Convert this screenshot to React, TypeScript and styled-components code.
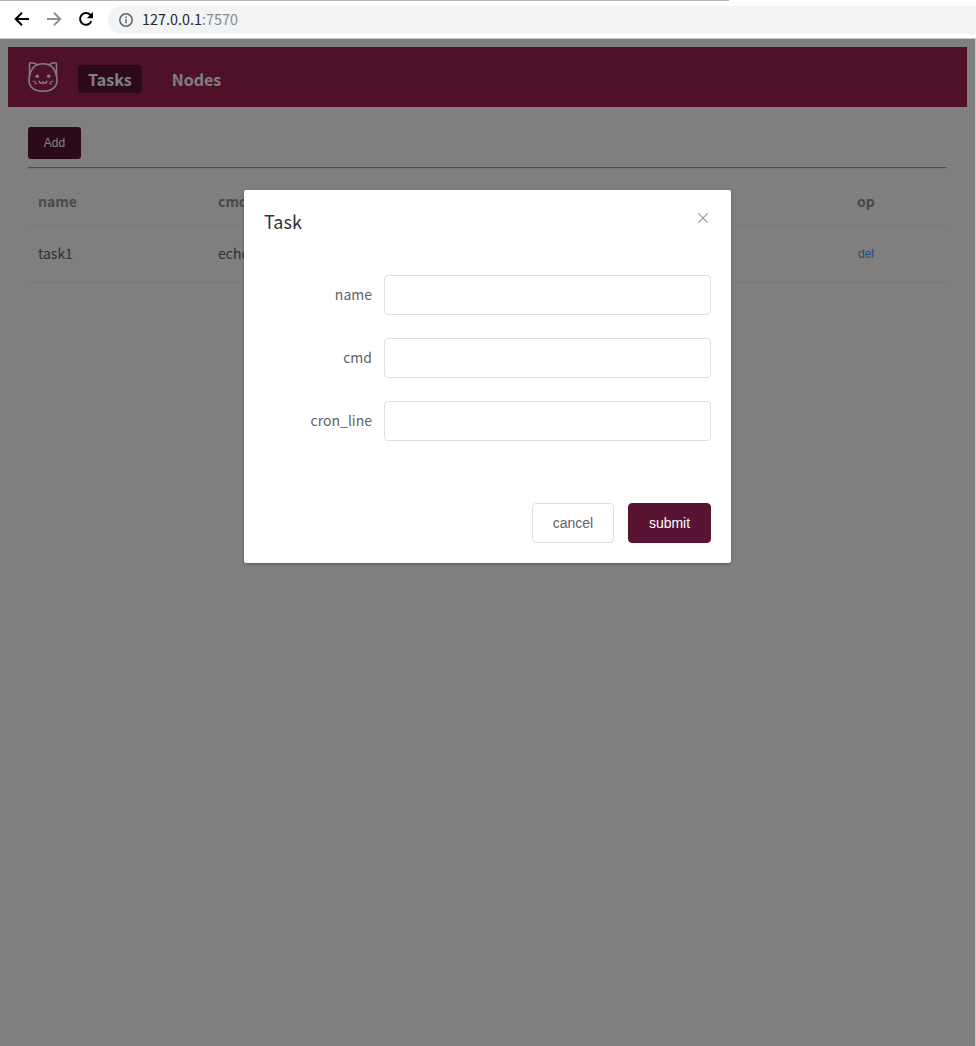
import React from "react";
import styled, { createGlobalStyle } from "styled-components";

const GlobalStyle = createGlobalStyle`
  * { box-sizing: border-box; }
  body { margin: 0; background: #fff; overflow: hidden; }
`;

const textFont = `"Noto Sans CJK SC", "Noto Sans", sans-serif`;
const buttonFont = `"Liberation Sans", Arial, sans-serif`;

const Window = styled.div`
  height: 100vh;
  display: flex;
  flex-direction: column;
  font-family: ${textFont};
`;

const TabEdge = styled.div`
  width: 729px;
  height: 1px;
  background: #b5b5b5;
`;

const BrowserBar = styled.div`
  height: 38px;
  display: flex;
  align-items: center;
  padding-left: 12px;
  border-bottom: 1px solid #c8c9ca;
`;

const NavIcons = styled.div`
  display: flex;
  gap: 12px;
  margin: -2px 12px 0 0;
  svg { display: block; }
`;

const AddressField = styled.div`
  flex: 1;
  height: 28px;
  display: flex;
  align-items: center;
  gap: 8px;
  padding-left: 10px;
  border-radius: 14px 0 0 14px;
  background: #f1f3f4;
  color: #85898d;
  font-size: 14.4px;
  line-height: 20px;
`;

const Address = styled.div`
  padding-bottom: 2px;
  span { color: #24272b; }
`;

const Viewport = styled.div`
  position: relative;
  flex: 1;
  margin-right: 1px;
  padding: 8px;
  background: #fff;
  box-shadow: 1px 0 #c8c9ca;
`;

const Header = styled.header`
  height: 60px;
  display: flex;
  align-items: center;
  padding: 0 20px;
  background: #9f2255;
`;

const Logo = styled.svg`
  width: 30px;
  height: 30px;
  margin-right: 20px;
`;

const NavLink = styled.a<{ $active?: boolean }>`
  height: 28px;
  margin: 4px 20px 0 0;
  padding: 0 10px;
  border-radius: 4px;
  background: ${(p) => (p.$active ? "#5a1433" : "transparent")};
  color: #fff;
  font-size: 16px;
  font-weight: 700;
  line-height: 28px;
`;

const Main = styled.main`
  padding: 20px;
`;

const AddButton = styled.button`
  display: block;
  width: 53px;
  height: 32px;
  padding: 0;
  border: 0;
  border-radius: 3px;
  background: #5a1433;
  color: #fff;
  font: 12px ${buttonFont};
`;

const Divider = styled.hr`
  margin: 8px 0;
  border: 1px solid;
  border-color: #9a9a9a #eee #eee #9a9a9a;
`;

const TableRow = styled.div<{ $head?: boolean }>`
  height: ${(p) => (p.$head ? 49 : 57)}px;
  display: grid;
  grid-template-columns: 180px 1fr 100px;
  align-items: center;
  border-bottom: 1px solid #ebeef5;
  color: ${(p) => (p.$head ? "#909399" : "#606266")};
  font-size: 14px;
  font-weight: ${(p) => (p.$head ? 700 : 400)};
  line-height: 23px;
  padding-bottom: ${(p) => (p.$head ? 0 : 1)}px;
`;

const Cell = styled.div`
  padding: 0 10px;
`;

const TextButton = styled.button`
  display: block;
  padding: 1px 1px 0;
  border: 0;
  background: none;
  color: #409eff;
  font: 12px ${buttonFont};
`;

const Overlay = styled.div`
  position: absolute;
  inset: 0;
  display: flex;
  justify-content: center;
  align-items: flex-start;
  padding-top: 151px;
  background: rgba(0, 0, 0, 0.5);
`;

const Dialog = styled.section`
  width: 487px;
  height: 373px;
  display: flex;
  flex-direction: column;
  padding: 20px;
  border-radius: 2px;
  background: #fff;
  box-shadow: 0 1px 3px rgba(0, 0, 0, 0.3);
`;

const DialogHeader = styled.div`
  height: 25px;
  display: flex;
  justify-content: space-between;
  color: #303133;
  font-size: 18px;
  line-height: 22px;
`;

const Form = styled.form`
  display: flex;
  flex-direction: column;
  gap: 23px;
  margin-top: 40px;
`;

const Field = styled.label`
  height: 40px;
  display: grid;
  grid-template-columns: 108px 1fr;
  column-gap: 12px;
  align-items: center;
  color: #606266;
  font-size: 14px;
  line-height: 38px;
  text-align: right;
`;

const Caption = styled.span`
  height: 40px;
`;

const TextInput = styled.input`
  width: 100%;
  height: 40px;
  padding: 0 15px;
  border: 1px solid #dcdfe6;
  border-radius: 4px;
  background: #fff;
`;

const Actions = styled.div`
  display: flex;
  justify-content: flex-end;
  gap: 14px;
  margin-top: auto;
`;

const ActionButton = styled.button<{ $primary?: boolean }>`
  width: ${(p) => (p.$primary ? 83 : 82)}px;
  height: 40px;
  padding: 0;
  border: 1px solid ${(p) => (p.$primary ? "#5a1433" : "#dcdfe6")};
  border-radius: 4px;
  background: ${(p) => (p.$primary ? "#5a1433" : "#fff")};
  color: ${(p) => (p.$primary ? "#fff" : "#606266")};
  font: 14px ${buttonFont};
`;

const ArrowIcon = ({ forward }: { forward?: boolean }) => (
  <svg width="20" height="20" viewBox="0 0 20 20" fill="none" stroke={forward ? "#909090" : "#000"} strokeWidth="2">
    <path d={forward ? "M3 10h13M10 3.7l6.3 6.3-6.3 6.3" : "M17 10H4M10 3.7L3.7 10l6.3 6.3"} />
  </svg>
);

const ReloadIcon = () => (
  <svg width="20" height="20" viewBox="0 0 20 20">
    <path d="M15.4 12.2a5.9 5.9 0 1 1-1.2-6.4l1.2 1.2" fill="none" stroke="#000" strokeWidth="2" />
    <path d="M17 3v6.2h-6.2z" fill="#000" />
  </svg>
);

const InfoIcon = () => (
  <svg width="16" height="16" viewBox="0 0 16 16" fill="none" stroke="#5f6368" strokeWidth="1.5">
    <circle cx="8" cy="8" r="6.2" />
    <path d="M8 7.2v4M8 4.4v1.6" />
  </svg>
);

const CatLogo = () => (
  <Logo viewBox="0 0 30 30" fill="none" stroke="#fff" strokeWidth="1.6" strokeLinecap="round" strokeLinejoin="round">
    <path d="M15 1.8C6.5 1.8 1.9 8.2 1 17.5C.6 25 6 29.2 15 29.2S29.4 25 29 17.5C28.1 8.2 23.5 1.8 15 1.8Z" />
    <path d="M1.5 14V2Q1.5 .8 2.7.8Q6 .8 9.5 2.7M28.5 14V2Q28.5 .8 27.3.8Q24 .8 20.5 2.7" />
    <circle cx="9.3" cy="14.2" r="1.8" fill="#fff" stroke="none" />
    <circle cx="20.7" cy="14.2" r="1.8" fill="#fff" stroke="none" />
    <path d="M11.2 19.3q.4 2 2 2t1.8-1.5q.3 1.5 1.8 1.5t2-2" strokeWidth="1.5" />
    <path d="M5 19.3l3 .8M6.5 22l2-.6M25 19.3l-3 .8M23.5 22l-2-.6" strokeWidth="1" />
  </Logo>
);

const fields = ["name", "cmd", "cron_line"];

export default function App() {
  return (
    <Window>
      <GlobalStyle />
      <TabEdge />
      <BrowserBar>
        <NavIcons>
          <ArrowIcon />
          <ArrowIcon forward />
          <ReloadIcon />
        </NavIcons>
        <AddressField>
          <InfoIcon />
          <Address><span>127.0.0.1</span>:7570</Address>
        </AddressField>
      </BrowserBar>
      <Viewport>
        <Header>
          <CatLogo />
          <NavLink $active>Tasks</NavLink>
          <NavLink>Nodes</NavLink>
        </Header>
        <Main>
          <AddButton>Add</AddButton>
          <Divider />
          <TableRow $head>
            <Cell>name</Cell>
            <Cell>cmd</Cell>
            <Cell>op</Cell>
          </TableRow>
          <TableRow>
            <Cell>task1</Cell>
            <Cell>echo</Cell>
            <Cell><TextButton>del</TextButton></Cell>
          </TableRow>
        </Main>
        <Overlay>
          <Dialog>
            <DialogHeader>
              Task
              <svg width="16" height="16" viewBox="0 0 16 16" stroke="#909399" strokeWidth="1.1">
                <path d="M3.3 3.3l9.4 9.4M12.7 3.3L3.3 12.7" />
              </svg>
            </DialogHeader>
            <Form>
              {fields.map((name) => (
                <Field key={name}>
                  <Caption>{name}</Caption>
                  <TextInput />
                </Field>
              ))}
            </Form>
            <Actions>
              <ActionButton>cancel</ActionButton>
              <ActionButton $primary>submit</ActionButton>
            </Actions>
          </Dialog>
        </Overlay>
      </Viewport>
    </Window>
  );
}
